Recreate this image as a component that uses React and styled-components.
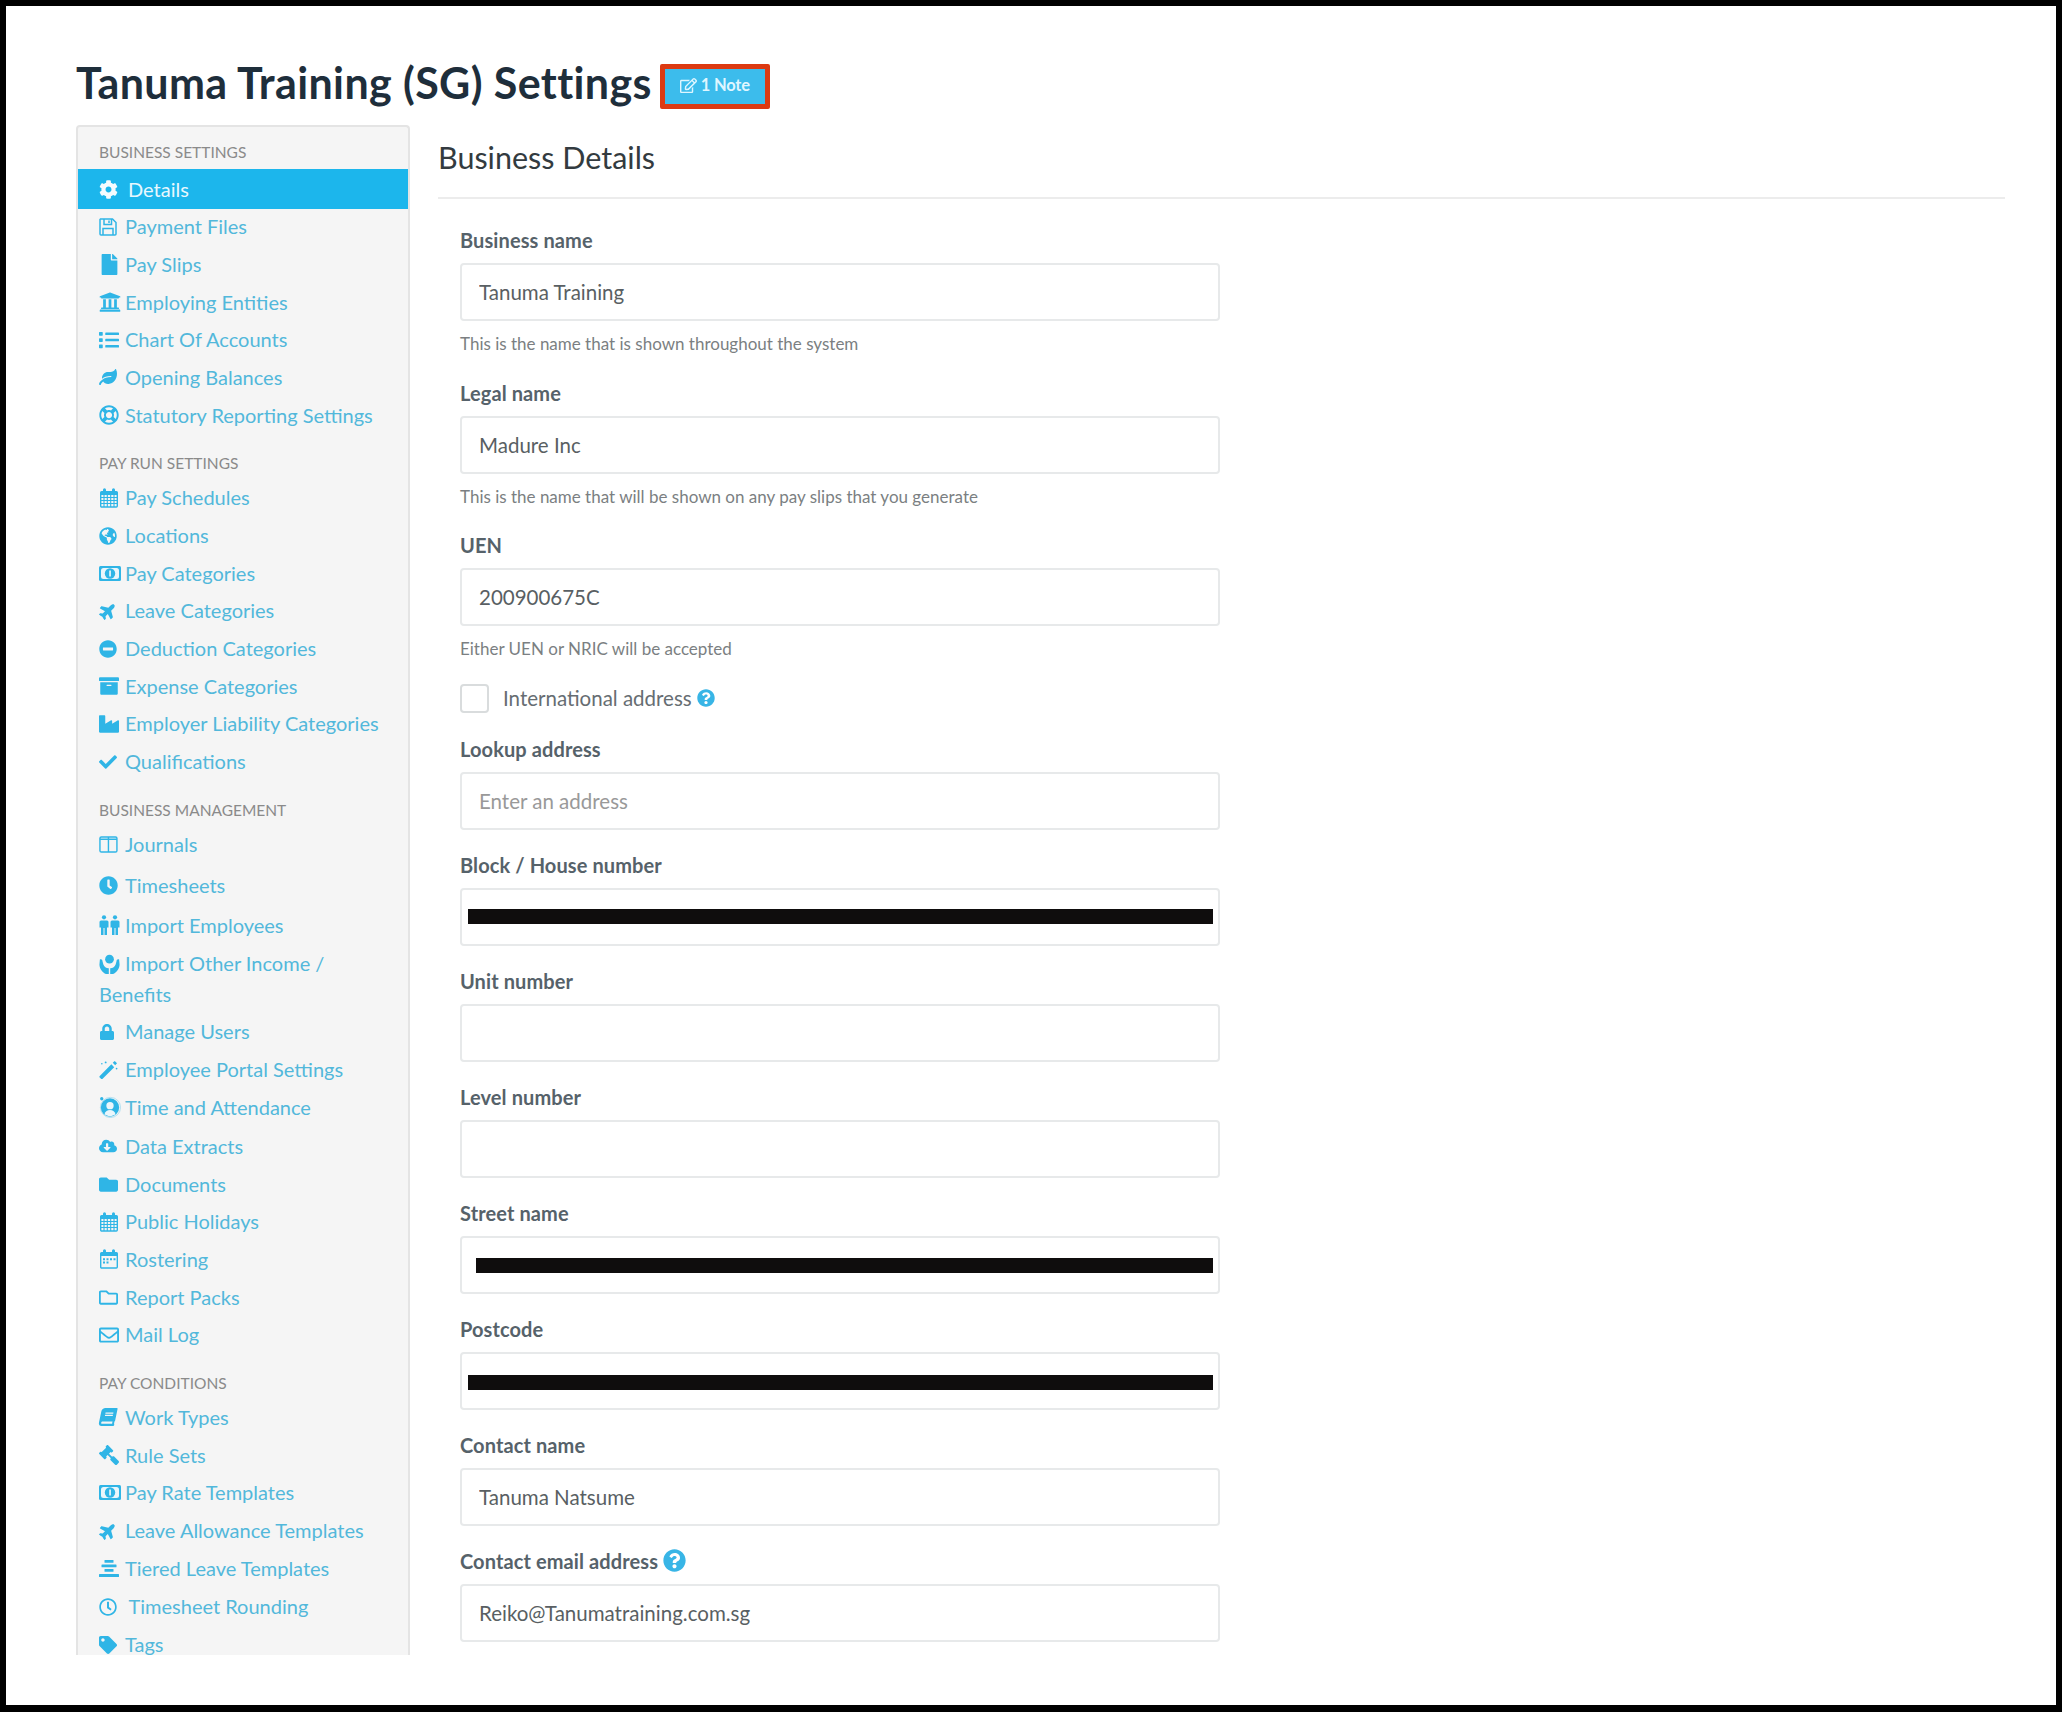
import React from "react";
import styled, { createGlobalStyle } from "styled-components";
import {
  FaCog, FaFile, FaUniversity, FaList, FaLeaf, FaRegLifeRing, FaGlobeAmericas,
  FaPlane, FaMinusCircle, FaArchive, FaIndustry, FaCheck, FaClock, FaLock,
  FaCloudDownloadAlt, FaFolder, FaRegFolder, FaRegEnvelope, FaBook, FaGavel,
  FaRegClock, FaTag, FaRegEdit, FaQuestionCircle,
} from "react-icons/fa";

const Global = createGlobalStyle`
  html, body { margin: 0; padding: 0; background: #fff; }
  body { font-family: Lato, "Open Sans", sans-serif; }
  * { box-sizing: border-box; }
`;

const Frame = styled.div`
  width: 2062px;
  height: 1712px;
  border: solid #000;
  border-width: 6px 6px 7px 6px;
  background: #fff;
  overflow: hidden;
`;
const Header = styled.header`
  display: flex;
  align-items: center;
  gap: 8px;
  height: 45px;
  margin: 58px 0 16px 70px;
`;
const Title = styled.h1`
  margin: 0;
  padding-bottom: 8px;
  font-size: 43px;
  font-weight: 700;
  letter-spacing: 0.38px;
  color: #1e2e3b;
  white-space: nowrap;
`;
const NoteButton = styled.button`
  display: inline-flex;
  align-items: center;
  justify-content: center;
  gap: 4px;
  width: 110px;
  height: 45px;
  border: 5px solid #dc3a12;
  border-radius: 2px;
  background: #3cbcec;
  color: #dff6ff;
  font: 700 16.5px Lato, sans-serif;
  letter-spacing: -0.2px;
  padding: 0 0 3px;
  svg { width: 17px; height: 17px; }
`;
const Columns = styled.div`
  display: flex;
  align-items: flex-start;
  gap: 28px;
  padding-left: 70px;
`;
const Sidebar = styled.nav`
  width: 334px;
  height: 1530px;
  flex: none;
  overflow: hidden;
  background: #f5f5f5;
  border: 2px solid #e4e4e4;
  border-bottom: 0;
  border-radius: 4px 4px 0 0;
`;
const GroupHeading = styled.div`
  height: 45px;
  padding: 17px 21px 4px;
  font-size: 15.5px;
  line-height: 24px;
  font-weight: 400;
  color: #8a8a8a;
  text-transform: uppercase;
  white-space: nowrap;
  &:first-child {
    height: 43.2px;
    padding-top: 13px;
  }
`;
const Row = styled.a`
  display: block;
  padding: 3.35px 21px;
  margin-top: ${(p) => p.$above || 0}px;
  font-size: 20px;
  line-height: 31px;
  color: #52b8db;
`;
const ActiveRow = styled(Row)`
  margin: -1px 0;
  padding: 4.35px 21px;
  background: #1cb6ec;
  color: #e8f8fe;
`;
const IconSlot = styled.span`
  display: inline-flex;
  align-items: center;
  height: 31px;
  width: ${(p) => p.$slot || 26}px;
  vertical-align: top;
  color: ${(p) => (p.$active ? "#f4fbfe" : "#2fb5e6")};
  svg {
    width: auto;
    height: ${(p) => p.$size || 18}px;
  }
`;
const PlaneGlyph = styled(FaPlane)`
  transform: rotate(-45deg);
`;
const GavelGlyph = styled(FaGavel)`
  transform: scaleX(-1);
`;
const BookGlyph = styled(FaBook)`
  transform: skewX(-12deg);
`;
const Main = styled.main`
  width: 1567px;
`;
const PageHeading = styled.h2`
  margin: 0;
  height: 74px;
  padding-bottom: 6px;
  border-bottom: 2px solid #ececec;
  font-size: 30.5px;
  line-height: 64px;
  font-weight: 400;
  color: #333b40;
`;
const Form = styled.form`
  width: 782px;
  padding: 29px 0 0 22px;
`;
const Field = styled.div`
  margin-bottom: ${(p) => (p.$help ? 24.5 : 23)}px;
`;
const Label = styled.label`
  display: flex;
  align-items: center;
  gap: 5px;
  height: 24px;
  margin-bottom: 11px;
  font-size: 20px;
  font-weight: 700;
  letter-spacing: 0.1px;
  color: #56626a;
`;
const InputBox = styled.div`
  position: relative;
`;
const Input = styled.input`
  display: block;
  width: 760px;
  height: 58px;
  padding: 0 17px;
  border: 2px solid #e7e9ea;
  border-radius: 4px;
  background: #fff;
  font: 400 20.5px Lato, sans-serif;
  color: #595f63;
  outline: none;
  &::placeholder { color: #999; opacity: 1; }
`;
const Redaction = styled.div`
  position: absolute;
  left: ${(p) => p.$left}px;
  right: 7px;
  top: ${(p) => p.$top}px;
  height: 15px;
  background: #0f0d0d;
`;
const Help = styled.div`
  height: 24px;
  margin-top: 11px;
  font-size: 17px;
  line-height: 24px;
  color: #7b7f82;
`;
const CheckRow = styled.div`
  display: flex;
  align-items: center;
  height: 29px;
  margin: -2px 0 24px;
`;
const CheckBox = styled.span`
  width: 29px;
  height: 29px;
  margin-right: 14px;
  border: 2px solid #d9dcdd;
  border-radius: 4px;
  background: #fff;
`;
const CheckLabel = styled.span`
  font-size: 20.5px;
  color: #666d72;
  margin-right: 5px;
`;
const HelpMark = styled.span`
  display: inline-flex;
  color: #38b5e6;
  font-size: ${(p) => p.$size}px;
`;

const CalendarIcon = ({ dense = true }) => (
  <svg viewBox="0 0 20 20" fill="currentColor">
    <path d="M1 4.500A1.500 1.500 0 0 1 2.500 3H4V1.800a1.200 1.200 0 0 1 3 0V3h6V1.800a1.200 1.200 0 0 1 3 0V3h1.500A1.500 1.500 0 0 1 19 4.500V7H1z" />
    <rect x="1.700" y="6" width="16.600" height="13" rx="1" fill="none" stroke="currentColor" strokeWidth="1.400" />
    {dense ? (
      <path d="M1 9.500h18M1 12.500h18M1 15.500h18M5 7v12M8.300 7v12M11.700 7v12M15 7v12" stroke="currentColor" strokeWidth="1.100" fill="none" />
    ) : (
      <path d="M4 9.200h2v2H4zM7.500 9.200h2v2h-2zM11 9.200h2v2h-2zM14.500 9.200h2v2h-2zM4 12.500h2v2H4zM7.500 12.500h2v2h-2z" />
    )}
  </svg>
);
const FloppyIcon = () => (
  <svg viewBox="0 0 18 18" fill="none" stroke="currentColor" strokeWidth="1.500">
    <path d="M1.500 1h12L17 4.500V16a1 1 0 0 1-1 1H2a1 1 0 0 1-1-1V1.500z" />
    <path d="M5 1v5.500h7.500V1M4 17v-6.500h10V17" />
    <path d="M10 2.500v2.500" />
  </svg>
);
const ColumnsIcon = () => (
  <svg viewBox="0 0 20 18" fill="none" stroke="currentColor" strokeWidth="1.500">
    <rect x="1" y="1" width="18" height="16" rx="1.500" />
    <path d="M10 1v16M1 3.500h18" />
  </svg>
);
const PeopleIcon = () => (
  <svg viewBox="0 0 21 20" fill="currentColor">
    {[0, 11].map((x) => (
      <g key={x} transform={`translate(${x} 0)`}>
        <circle cx="5" cy="2.300" r="2.100" />
        <path d="M2 5.500h6a1.500 1.500 0 0 1 1.500 1.500v5.500H8V20H5.500v-7h-1v7H2v-7.500H.5V7A1.500 1.500 0 0 1 2 5.500z" />
      </g>
    ))}
  </svg>
);
const HandsIcon = () => {
  const hand = "M1 7.500C2.500 6.500 4 7.500 4 9.500L5 13C6 15.500 8 17 11.200 17.500V24H8C4 22 .5 18 .5 13z";
  return (
    <svg viewBox="0 0 24 24" fill="currentColor">
      <circle cx="12" cy="7" r="5" />
      <path d={hand} />
      <path d={hand} transform="matrix(-1 0 0 1 24 0)" />
    </svg>
  );
};
const AttendanceIcon = () => (
  <svg viewBox="0 0 24 24" fill="currentColor">
    <circle cx="12.500" cy="12.500" r="11" fill="none" stroke="currentColor" strokeWidth=".7" opacity=".5" />
    <circle cx="12" cy="12.500" r="10" />
    <circle cx="3" cy="3" r="1.800" />
    <circle cx="12" cy="10.500" r="4" fill="#eaf6fb" />
    <path d="M6 20c1-3.500 3-4.800 6-4.800s5 1.300 6 4.800c-1.800 1.300-3.800 2-6 2s-4.200-.7-6-2z" fill="#eaf6fb" />
  </svg>
);
const MoneyIcon = () => (
  <svg viewBox="0 0 22 15" fill="currentColor">
    <rect width="22" height="15" rx="1.500" />
    <rect x="2" y="2" width="18" height="11" rx="2.500" fill="#eaf6fb" />
    <circle cx="11" cy="7.500" r="5.200" />
    <rect x="10.200" y="4.500" width="1.700" height="6" fill="#eaf6fb" />
  </svg>
);
const WandIcon = () => (
  <svg viewBox="0 0 20 20" fill="currentColor">
    <path d="M.8 16.800L13 4.500 16 7.500 3.800 19.700a1.200 1.200 0 0 1-1.700 0L.8 18.500a1.200 1.200 0 0 1 0-1.700z" />
    <path d="M14.500 3L16.500 1 19 3.500 17 5.500z" />
    <circle cx="7" cy="2.500" r="1" />
    <circle cx="3" cy="4" r=".8" />
    <circle cx="18.500" cy="9" r=".9" />
  </svg>
);
const TierIcon = () => (
  <svg viewBox="0 0 20 17" fill="currentColor">
    <rect x="5.500" y="0" width="9" height="2.700" rx=".5" />
    <rect x="2.500" y="4.500" width="15" height="2.700" rx=".5" />
    <rect x="5.500" y="9" width="9" height="2.700" rx=".5" />
    <rect x="0" y="14" width="20" height="3" rx=".5" />
  </svg>
);

const groups = [
  {
    title: "Business Settings",
    items: [
      { label: "Details", icon: <FaCog />, active: true, slot: 29, size: 19 },
      { label: "Payment Files", icon: <FloppyIcon />, size: 18 },
      { label: "Pay Slips", icon: <FaFile />, size: 21 },
      { label: "Employing Entities", icon: <FaUniversity />, size: 22 },
      { label: "Chart Of Accounts", icon: <FaList />, size: 20 },
      { label: "Opening Balances", icon: <FaLeaf />, size: 18 },
      { label: "Statutory Reporting Settings", icon: <FaRegLifeRing />, size: 20 },
    ],
  },
  {
    title: "Pay Run Settings",
    items: [
      { label: "Pay Schedules", icon: <CalendarIcon />, size: 20 },
      { label: "Locations", icon: <FaGlobeAmericas />, size: 18 },
      { label: "Pay Categories", icon: <MoneyIcon />, size: 15 },
      { label: "Leave Categories", icon: <PlaneGlyph />, size: 18 },
      { label: "Deduction Categories", icon: <FaMinusCircle />, size: 18 },
      { label: "Expense Categories", icon: <FaArchive />, size: 20 },
      { label: "Employer Liability Categories", icon: <FaIndustry />, size: 20 },
      { label: "Qualifications", icon: <FaCheck />, size: 18 },
    ],
  },
  {
    title: "Business Management",
    items: [
      { label: "Journals", icon: <ColumnsIcon />, size: 17 },
      { label: "Timesheets", icon: <FaClock />, size: 19, above: 3.3 },
      { label: "Import Employees", icon: <PeopleIcon />, size: 20, above: 2.3 },
      { label: "Import Other Income / Benefits", icon: <HandsIcon />, size: 21 },
      { label: "Manage Users", icon: <FaLock />, size: 16 },
      { label: "Employee Portal Settings", icon: <WandIcon />, size: 19 },
      { label: "Time and Attendance", icon: <AttendanceIcon />, size: 22 },
      { label: "Data Extracts", icon: <FaCloudDownloadAlt />, size: 18, above: 1.6 },
      { label: "Documents", icon: <FaFolder />, size: 19 },
      { label: "Public Holidays", icon: <CalendarIcon />, size: 20 },
      { label: "Rostering", icon: <CalendarIcon dense={false} />, size: 20 },
      { label: "Report Packs", icon: <FaRegFolder />, size: 19 },
      { label: "Mail Log", icon: <FaRegEnvelope />, size: 20 },
    ],
  },
  {
    title: "Pay Conditions",
    items: [
      { label: "Work Types", icon: <BookGlyph />, size: 18 },
      { label: "Rule Sets", icon: <GavelGlyph />, size: 20 },
      { label: "Pay Rate Templates", icon: <MoneyIcon />, size: 15 },
      { label: "Leave Allowance Templates", icon: <PlaneGlyph />, size: 18 },
      { label: "Tiered Leave Templates", icon: <TierIcon />, size: 17 },
      { label: "Timesheet Rounding", icon: <FaRegClock />, size: 18, slot: 29.5, above: 1 },
      { label: "Tags", icon: <FaTag />, size: 18 },
    ],
  },
];

const fieldsTop = [
  { label: "Business name", value: "Tanuma Training", help: "This is the name that is shown throughout the system" },
  { label: "Legal name", value: "Madure Inc", help: "This is the name that will be shown on any pay slips that you generate" },
  { label: "UEN", value: "200900675C", help: "Either UEN or NRIC will be accepted" },
];
const fieldsBottom = [
  { label: "Lookup address", placeholder: "Enter an address" },
  { label: "Block / House number", bar: { left: 8, top: 21 } },
  { label: "Unit number" },
  { label: "Level number" },
  { label: "Street name", bar: { left: 16, top: 22 } },
  { label: "Postcode", bar: { left: 8, top: 23 } },
  { label: "Contact name", value: "Tanuma Natsume" },
  { label: "Contact email address", value: "Reiko@Tanumatraining.com.sg", tip: true },
];

const FormField = ({ label, value = "", placeholder, help, bar, tip }) => (
  <Field $help={!!help}>
    <Label>
      {label}
      {tip && (
        <HelpMark $size={23}>
          <FaQuestionCircle />
        </HelpMark>
      )}
    </Label>
    <InputBox>
      <Input readOnly value={value} placeholder={placeholder} />
      {bar && <Redaction $left={bar.left} $top={bar.top} />}
    </InputBox>
    {help && <Help>{help}</Help>}
  </Field>
);

export default function App() {
  return (
    <Frame>
      <Global />
      <Header>
        <Title>Tanuma Training (SG) Settings</Title>
        <NoteButton>
          <FaRegEdit />1 Note
        </NoteButton>
      </Header>
      <Columns>
        <Sidebar>
          {groups.map((g) => (
            <React.Fragment key={g.title}>
              <GroupHeading>{g.title}</GroupHeading>
              {g.items.map((it) => {
                const R = it.active ? ActiveRow : Row;
                return (
                  <R key={it.label} $above={it.above}>
                    <IconSlot $slot={it.slot} $size={it.size} $active={it.active}>
                      {it.icon}
                    </IconSlot>
                    {it.label}
                  </R>
                );
              })}
            </React.Fragment>
          ))}
        </Sidebar>
        <Main>
          <PageHeading>Business Details</PageHeading>
          <Form>
            {fieldsTop.map((f) => (
              <FormField key={f.label} {...f} />
            ))}
            <CheckRow>
              <CheckBox />
              <CheckLabel>International address</CheckLabel>
              <HelpMark $size={18}>
                <FaQuestionCircle />
              </HelpMark>
            </CheckRow>
            {fieldsBottom.map((f) => (
              <FormField key={f.label} {...f} />
            ))}
          </Form>
        </Main>
      </Columns>
    </Frame>
  );
}
